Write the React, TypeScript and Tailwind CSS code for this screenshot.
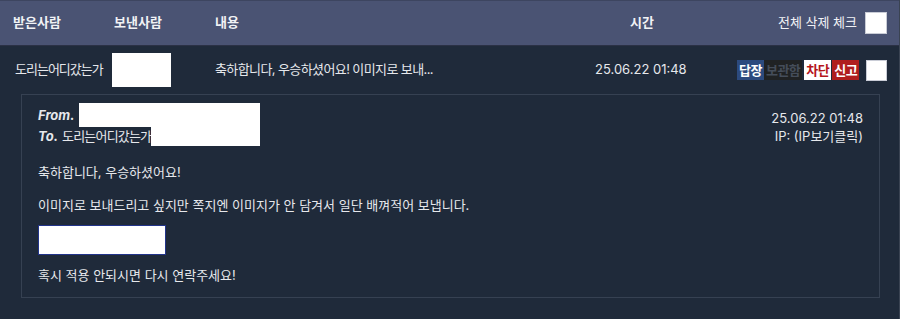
import React from "react";

const font = { fontFamily: 'Inter, "Noto Sans CJK KR", sans-serif' };

function Box({ className = "" }: { className?: string }) {
  return <span className={`block shrink-0 bg-white ${className}`} />;
}

export default function App() {
  return (
    <div
      className="flex h-[319px] w-[900px] flex-col overflow-hidden whitespace-nowrap border-r border-[#3a4352] bg-[#1f2a3a] text-[13px] text-[#e6e8ec]"
      style={font}
    >
      {/* header */}
      <div className="flex h-[46px] shrink-0 items-center border-t border-b border-t-[#3d4560] border-b-[#2b3145] bg-[#4a5373] font-bold text-[#f1f2f5]">
        <div className="w-[114px] shrink-0 pl-[13px]">받은사람</div>
        <div className="w-[101px] shrink-0">보낸사람</div>
        <div className="w-[415px] shrink-0">내용</div>
        <div className="w-[80px] shrink-0">시간</div>
        <div className="flex flex-1 items-center justify-end gap-[8px] pr-[12px] font-normal">
          <span>전체 삭제 체크</span>
          <span className="h-[22px] w-[22px] border border-[#c9ccd6] bg-white" />
        </div>
      </div>

      {/* row */}
      <div className="flex h-[48px] shrink-0 items-center">
        <div className="w-[112px] shrink-0 pl-[15px] tracking-[-1px]">도리는어디갔는가</div>
        <div className="w-[103px] shrink-0">
          <Box className="h-[34px] w-[59px]" />
        </div>
        <div className="w-[380px] shrink-0 tracking-[-0.6px]">축하합니다, 우승하셨어요! 이미지로 보내...</div>
        <div className="w-[142px] shrink-0">25.06.22 01:48</div>
        <div className="flex items-center font-bold tracking-[-0.5px]">
          <span className="bg-[#2c4a7e] px-[2px] leading-[20px] text-white">답장</span>
          <span className="bg-[#202224] px-[2px] leading-[20px] text-[#454d5a]">보관함</span>
          <span className="ml-[2px] bg-white px-[2px] leading-[20px] text-[#b5161b]">차단</span>
          <span className="ml-px bg-[#b01e1e] px-[2px] leading-[20px] text-white">신고</span>
          <span className="ml-[7px] h-[21px] w-[21px] border border-[#c9ccd6] bg-white" />
        </div>
      </div>

      {/* detail */}
      <div className="ml-[21px] mr-[19px] h-[204px] shrink-0 border border-[#364152] px-[16px] pt-[8px]">
        <div className="flex justify-between">
          <div className="w-[222px] leading-[19px]">
            <div className="flex items-center">
              <span className="font-bold italic">From.</span>
              <Box className="ml-[4px] h-[24px] flex-1" />
            </div>
            <div className="flex items-center">
              <span className="mr-[4px] font-bold italic">To.</span>
              <span className="tracking-[-0.8px]">도리는어디갔는가</span>
              <span className="-mt-[3px] block h-[22px] flex-1 bg-white" />
            </div>
          </div>
          <div className="pt-[6px] text-right leading-[18px]">
            <div>25.06.22 01:48</div>
            <div>IP: (IP보기클릭)</div>
          </div>
        </div>
        <p className="mt-[17px]">축하합니다, 우승하셨어요!</p>
        <p className="mt-[13px]">이미지로 보내드리고 싶지만 쪽지엔 이미지가 안 담겨서 일단 배껴적어 보냅니다.</p>
        <div className="mt-[10px] h-[30px] w-[128px] border border-[#22348a] bg-white" />
        <p className="mt-[11px]">혹시 적용 안되시면 다시 연락주세요!</p>
      </div>
    </div>
  );
}
